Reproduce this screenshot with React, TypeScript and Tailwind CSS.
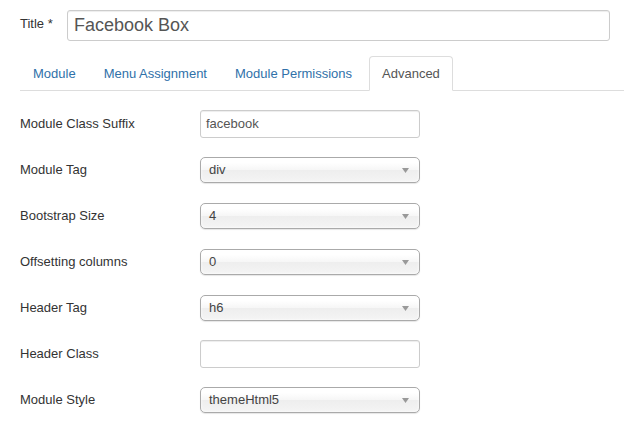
import React from "react";

const TABS = ["Module", "Menu Assignment", "Module Permissions", "Advanced"];

type Field = { label: string; kind: "text" | "select"; value: string };

const FIELDS: Field[] = [
  { label: "Module Class Suffix", kind: "text", value: "facebook" },
  { label: "Module Tag", kind: "select", value: "div" },
  { label: "Bootstrap Size", kind: "select", value: "4" },
  { label: "Offsetting columns", kind: "select", value: "0" },
  { label: "Header Tag", kind: "select", value: "h6" },
  { label: "Header Class", kind: "text", value: "" },
  { label: "Module Style", kind: "select", value: "themeHtml5" },
];

function TextInput({ value }: { value: string }) {
  return (
    <div className="w-[220px] h-[28px] flex items-center px-[5px] border border-[#ccc] rounded-[3px] bg-white shadow-[inset_0_1px_1px_rgba(0,0,0,0.075)] text-[13px] text-[#555]">
      {value}
    </div>
  );
}

function Select({ value }: { value: string }) {
  return (
    <div className="w-[220px] h-[26px] flex items-center justify-between pl-[8px] pr-[10px] border border-[#aaa] rounded-[5px] bg-[linear-gradient(#ffffff_20%,#f6f6f6_50%,#eeeeee_52%,#f4f4f4_100%)] shadow-[0_0_3px_#fff_inset,0_1px_1px_rgba(0,0,0,0.1)] text-[13px] text-[#444]">
      <span>{value}</span>
      <svg width="7" height="5" viewBox="0 0 7 5">
        <path d="M0 0 L7 0 L3.5 5 Z" fill="#999" />
      </svg>
    </div>
  );
}

export default function App() {
  return (
    <div className="w-[624px] h-[424px] bg-white overflow-hidden font-['Liberation_Sans',Arial,sans-serif] text-[#333] text-[13px]">
      <div className="flex items-center pt-[10px] pl-[20px] pr-[14px]">
        <label className="w-[47px] leading-[18px] -mt-[3px]">Title *</label>
        <div className="flex-1 h-[31px] flex items-center px-[6px] border border-[#ccc] rounded-[3px] shadow-[inset_0_1px_1px_rgba(0,0,0,0.075)] text-[18px] text-[#555]">
          Facebook Box
        </div>
      </div>

      <div className="ml-[20px] mt-[15px] flex border-b border-[#ddd] h-[35px]">
        {TABS.map((t) => {
          const active = t === "Advanced";
          return (
            <div
              key={t}
              className={`px-[12px] mr-[2px] h-[35px] flex items-center rounded-t-[4px] border ${
                active
                  ? "ml-[2px] border-[#ddd] border-b-white bg-white text-[#555]"
                  : "border-transparent text-[#3071a9]"
              }`}
            >
              {t}
            </div>
          );
        })}
      </div>

      <div className="pl-[20px] pt-[19px] flex flex-col gap-[18px]">
        {FIELDS.map((f) => (
          <div key={f.label} className="flex items-center h-[28px]">
            <label className="w-[180px]">{f.label}</label>
            {f.kind === "text" ? <TextInput value={f.value} /> : <Select value={f.value} />}
          </div>
        ))}
      </div>
    </div>
  );
}
